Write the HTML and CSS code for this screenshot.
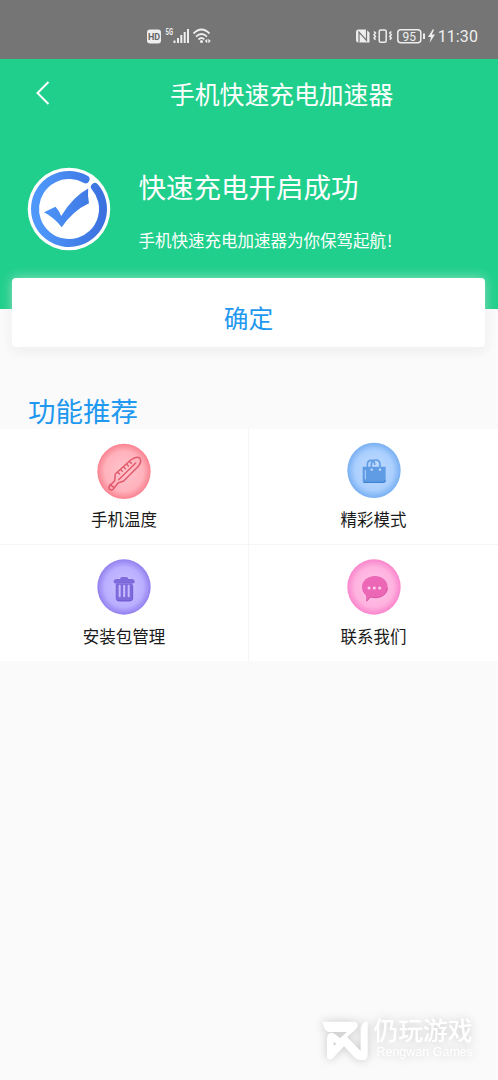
FILE: index.html
```html
<!DOCTYPE html>
<html lang="zh-CN">
<head>
<meta charset="utf-8">
<meta name="viewport" content="width=device-width, initial-scale=1">
<title>手机快速充电加速器</title>
<link rel="stylesheet" href="styles.css">
</head>
<body>
<div class="status">
  <svg class="status-left" viewBox="0 0 66 18" width="66" height="18">
    <rect x="1" y="2.500" width="14" height="14" rx="3" fill="#eee"/>
    <text x="8" y="12.800" class="hd" text-anchor="middle">HD</text>
    <text x="19.500" y="8" class="fiveg" textLength="7.500" lengthAdjust="spacingAndGlyphs">5G</text>
    <g fill="#eee"><rect x="27.500" y="13.500" width="2" height="2.500"/><rect x="31" y="11" width="2" height="5"/><rect x="34.300" y="8" width="2" height="8"/><rect x="37.700" y="5" width="2" height="11"/><rect x="41" y="2" width="2" height="14"/></g>
    <g fill="none" stroke="#eee" stroke-width="1.800"><path d="M47.500 6.500Q55.500-1.500 63.500 6.500M50 9.600Q55.500 4.400 61 9.600M52.500 12.500Q55.500 9.700 58.300 12.300"/></g>
    <circle cx="55.500" cy="14.600" r="1.500" fill="#eee"/><path d="M61.300 11.800v4.400l-2.500-2.200zM62.300 11.800v4.400l2.500-2.200z" fill="#eee"/>
  </svg>
  <div class="status-right">
    <svg viewBox="0 0 82 18" width="82" height="18">
      <path d="M3.500 2.500H11l3.500 3v10H3.500Q1 15.500 1 13V5Q1 2.500 3.500 2.500Z" fill="#eee"/>
      <path d="M4 15.500V5l7.500 8.500V2.500" fill="none" stroke="#757575" stroke-width="1.200"/>
      <g fill="none" stroke="#eee" stroke-width="1.500"><rect x="24.200" y="3" width="7" height="12.300" rx="1.500"/><path d="M19 4.500l1.500 1.600L19 7.800l1.500 1.600L19 11.100l1.500 1.600M36.300 4.500l-1.500 1.600 1.500 1.700-1.500 1.600 1.500 1.700-1.500 1.600"/><rect x="42.800" y="2.700" width="23" height="13" rx="3"/><path d="M69 6.500v5.500" stroke-width="2"/></g>
      <text x="54.300" y="13.500" class="battery" text-anchor="middle">95</text>
      <path d="M78 2l-5 8h3l-1.500 6 5.500-8.500h-3.200L79 3z" fill="#eee"/>
    </svg>
    <span class="time">11:30</span>
  </div>
</div>
<header class="hero">
  <div class="nav">
    <svg class="back" viewBox="0 0 16 26" width="16" height="26"><path d="M14.500 2L3.500 13l11 11" fill="none" stroke="#fff" stroke-width="2"/></svg>
    <h1>手机快速充电加速器</h1>
  </div>
  <div class="result">
    <svg class="check" viewBox="0 0 84 84" width="84" height="84">
      <defs><linearGradient id="blue" x1="10" y1="0" x2="75" y2="0" gradientUnits="userSpaceOnUse"><stop stop-color="#4f98fb"/><stop offset="1" stop-color="#3c72df"/></linearGradient></defs>
      <circle cx="42" cy="42" r="41.300" fill="#fff"/>
      <path d="M58.500 12.270A34 34 0 1 0 67.950 20.030" fill="none" stroke="url(#blue)" stroke-width="8" stroke-linecap="round"/>
      <path d="M17 45.300L28.500 39.800Q32 43.500 34.200 49 46 29.500 61.200 21.500Q60.500 29 62 36.300 45.500 44 34.700 60.300 27 50.500 17 45.300Z" fill="url(#blue)"/>
    </svg>
    <div class="message">
      <h2>快速充电开启成功</h2>
      <p>手机快速充电加速器为你保驾起航<span class="mark">!</span></p>
    </div>
  </div>
</header>
<button class="confirm">确定</button>
<h3 class="section-title">功能推荐</h3>
<main class="grid">
  <div class="cell">
    <svg viewBox="51 39 162 168" width="54" height="56">
      <defs><radialGradient id="red"><stop stop-color="#ffc5cd"/><stop offset=".72" stop-color="#ffb2bc"/><stop offset="1" stop-color="#f98391"/></radialGradient></defs>
      <ellipse cx="132" cy="124" rx="80" ry="83" fill="url(#red)"/>
      <g fill="none" stroke="#e25a6c" stroke-width="4.500" stroke-linejoin="round" stroke-linecap="round"><path d="M106 132l46-42q18-13 27-6 8 9-4 25l-44 44-17 6-14 18q-6 6-12 0-4-5 2-10l14-15Z"/><path d="M116 149l51-50M113 127l6 5M122 119l5 5M131 111l5 5M140 103l5 5M149 95l5 5"/><path d="M90 163l11 9"/></g>
    </svg>
    <span>手机温度</span>
  </div>
  <div class="cell mode">
    <svg viewBox="50 37 162 168" width="54" height="56">
      <defs><radialGradient id="sky"><stop stop-color="#c3dcff"/><stop offset=".72" stop-color="#aacffe"/><stop offset="1" stop-color="#78aff2"/></radialGradient></defs>
      <ellipse cx="131" cy="122" rx="80" ry="83" fill="url(#sky)"/>
      <path d="M97 111h69v43q0 6-6 6h-57q-6 0-6-6Z" fill="#609ce4"/>
      <path d="M111 116v-10q0-14 11-14t11 14M123 119v-15q0-13 13-13t13 13v15" fill="none" stroke="#609ce4" stroke-width="5"/>
      <path d="M99 158h60q6 0 6-7" fill="none" stroke="#397fce" stroke-width="3"/>
      <path d="M105 121v28" stroke="#b5d5ff" stroke-width="3"/><g fill="#c5ddff"><circle cx="124" cy="120" r="3.500"/><circle cx="149" cy="120" r="3.500"/></g>
    </svg>
    <span>精彩模式</span>
  </div>
  <div class="cell lower">
    <svg viewBox="82 41 162 168" width="54" height="56">
      <defs><radialGradient id="violet"><stop stop-color="#cdc4ff"/><stop offset=".72" stop-color="#b9aeff"/><stop offset="1" stop-color="#9280ee"/></radialGradient></defs>
      <ellipse cx="163" cy="125" rx="80" ry="83" fill="url(#violet)"/>
      <path d="M132 111v-5q2-5 8-5h11q1-6 6-6h13q5 0 6 6h11q6 0 8 6v4Z" fill="#806bdd"/>
      <path d="M138 114h51v44q0 9-9 9h-33q-9 0-9-9Z" fill="#806bdd"/>
      <path d="M150 121v32M163.500 121v32M177 121v32" stroke="#c6bbff" stroke-width="6" stroke-linecap="round"/>
      <path d="M141 163q3 4 8 4h31q9 0 9-9v-37M133 112h61" fill="none" stroke="#634dcc" stroke-width="2.500"/>
    </svg>
    <span>安装包管理</span>
  </div>
  <div class="cell lower">
    <svg viewBox="50 41 162 168" width="54" height="56">
      <defs><radialGradient id="pink"><stop stop-color="#ffc8e9"/><stop offset=".72" stop-color="#ffb2df"/><stop offset="1" stop-color="#f985cc"/></radialGradient></defs>
      <ellipse cx="131" cy="125" rx="80" ry="83" fill="url(#pink)"/>
      <path d="M134 92c23 0 38 15 38 33s-14 32-37 32c-7 0-11-1-15-2q-6 9-13 13 2-10-1-19c-8-6-11-14-11-24 0-18 16-33 39-33Z" fill="#ec68b7"/>
      <path d="M171 128c-1 18-16 29-36 29q-8 0-15-2-6 9-12 13" fill="none" stroke="#cf4799" stroke-width="2.500"/>
      <g fill="#ffd2ed"><circle cx="116" cy="128" r="4.500"/><circle cx="132" cy="128" r="4.500"/><circle cx="148" cy="128" r="4.500"/></g>
    </svg>
    <span>联系我们</span>
  </div>
</main>
<footer class="watermark">
  <svg viewBox="37 38 140 124" width="46.700" height="41.300">
    <path fill="#fff" fill-rule="evenodd" d="M38 43h91q13 0 15 10 1 7-7 14l-25 22 41 42V66q2-21 21-24v103q-1 12-12 13h-12q-9-1-16-8l-31-33-32 34q-7 7-15 4-4-2-4-10V91q2-13 13-15 8 0 15 8l11 9 21-19H61q-12 0-17-11ZM72 104v11l8-6Z"/>
  </svg>
  <div class="brand"><strong>仍玩游戏</strong><span>Rengwan Games</span></div>
</footer>
</body>
</html>
```
FILE: styles.css
```css
* { box-sizing: border-box; }
body {
  margin: 0;
  height: 1080px;
  display: flex;
  flex-direction: column;
  background: #fafafa;
  font-family: "Noto Sans CJK SC", sans-serif;
  color: #1a1a1a;
  overflow: hidden;
}
h1, h2, h3, p { margin: 0; font-weight: 400; }
svg { display: block; flex: none; }
.status {
  flex: none;
  height: 59px;
  padding: 27px 20px 0 146px;
  display: flex;
  justify-content: space-between;
  background: #757575;
  color: #eee;
}
.status-right { display: flex; gap: 1px; }
.hd { font: 700 9px Roboto, sans-serif; fill: #666; }
.fiveg { font: 700 8.500px Roboto, sans-serif; fill: #eee; }
.battery { font: 400 12px Roboto, sans-serif; fill: #eee; }
.time { font: 400 16px/20px Roboto, sans-serif; letter-spacing: .1px; }
.hero { flex: none; height: 250px; background: #20cf8b; color: #fff; }
.nav { height: 68px; padding-left: 34px; display: flex; align-items: center; }
.back { margin-top: -1px; }
.nav h1 { margin-left: 120px; font-size: 24.800px; line-height: 36px; }
.result { display: flex; padding: 40px 27px 0; gap: 27.500px; }
.message h2 { font-size: 27.500px; line-height: 38px; }
.message p { margin-top: 23px; font-size: 16.500px; line-height: 24px; }
.mark { margin-left: 1px; }
.confirm {
  flex: none;
  position: relative;
  height: 69px;
  margin: -31px 13px 0 12px;
  padding: 9px 0 0;
  border: 0;
  border-radius: 4px;
  background: #fff;
  box-shadow: 0 0 12px rgba(245, 245, 245, .55), 0 4px 12px rgba(0, 0, 0, .055);
  color: #1f98ef;
  font: 400 24.700px/36px "Noto Sans CJK SC", sans-serif;
}
.section-title {
  margin: 44px 0 0 28px;
  height: 38px;
  color: #1f98ef;
  font-size: 27.500px;
  line-height: 38px;
}
.grid {
  display: grid;
  grid-template-columns: 248px 249px;
  grid-template-rows: 115px 116px;
  gap: 1px;
  background: #f5f5f5;
}
.cell {
  display: flex;
  flex-direction: column;
  align-items: center;
  padding-top: 14px;
  background: #fff;
  font-size: 16.500px;
  line-height: 24px;
}
.cell span { margin-top: 8px; }
.mode { padding-top: 13px; }
.mode span, .lower span { margin-top: 9px; }
.watermark {
  display: flex;
  gap: 5px;
  margin: auto 23px 19px auto;
  align-items: flex-end;
  color: #fff;
  filter: drop-shadow(0 0 5px rgba(0, 0, 0, .2));
}
.brand { display: flex; flex-direction: column; }
.brand strong {
  font: 500 24.800px/25px "Liberation Sans", "Noto Sans CJK SC", sans-serif;
}
.brand span { padding: 0 2px 0 3px; font: 12.500px/17px "Liberation Sans", sans-serif; }
```
